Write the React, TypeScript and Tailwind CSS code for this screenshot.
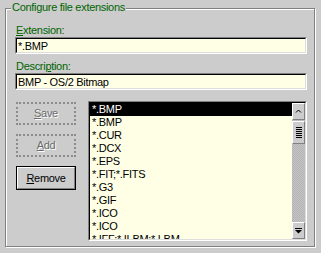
import React from "react";

const items = [
  "*.BMP",
  "*.BMP",
  "*.CUR",
  "*.DCX",
  "*.EPS",
  "*.FIT;*.FITS",
  "*.G3",
  "*.GIF",
  "*.ICO",
  "*.ICO",
  "*.IFF;*.ILBM;*.LBM",
];

function Sunken({ className = "", children }: { className?: string; children: React.ReactNode }) {
  return (
    <div className={`border border-t-[#808080] border-l-[#808080] border-b-white border-r-white ${className}`}>
      <div className="h-full border border-t-black border-l-black border-b-[#dedede] border-r-[#dedede] bg-[#ffffe6] overflow-hidden">
        {children}
      </div>
    </div>
  );
}

function Field({ label, u, rest, value }: { label: string; u: string; rest: string; value: string }) {
  return (
    <>
      <div className="h-[13px] leading-[13px] pl-[1px] text-[#006400]">
        {label}
        <span className="underline">{u}</span>
        {rest}
      </div>
      <Sunken className="w-[292px] h-[17px]">
        <div className="leading-[13px] pt-[1px] pl-[1px] whitespace-nowrap text-black">{value}</div>
      </Sunken>
    </>
  );
}

function DisabledButton({ first, rest }: { first: string; rest: string }) {
  return (
    <div className="w-[60px] h-[23px] border-2 border-dotted border-[#8c8c8c] flex items-center justify-center text-[#6c6c6c] [text-shadow:1px_1px_0_#fff]">
      <span>
        <span className="underline">{first}</span>
        {rest}
      </span>
    </div>
  );
}

function RaisedBox({ className = "", children }: { className?: string; children?: React.ReactNode }) {
  return (
    <div className={`border border-t-white border-l-white border-b-[#808080] border-r-[#808080] bg-[#cccccc] ${className}`}>
      {children}
    </div>
  );
}

export default function App() {
  return (
    <div
      className="w-[321px] h-[253px] bg-[#cccccc] pt-[8px] pl-[5px] text-[11px] tracking-[-0.3px] text-black overflow-hidden"
      style={{ fontFamily: '"Liberation Sans", Arial, sans-serif' }}
    >
      <div className="relative w-[310px] h-[239px] border border-[#808080] shadow-[inset_1px_1px_0_#fff,1px_1px_0_#fff]">
        <span className="absolute left-[5px] top-[-8px] px-[1px] bg-[#cccccc] leading-[13px] text-[#006400]">
          Configure file extensions
        </span>
        <div className="pl-[9px] pt-[15px] flex flex-col">
          <Field label="" u="E" rest="xtension:" value="*.BMP" />
          <div className="h-[6px]" />
          <Field label="Descri" u="p" rest="tion:" value="BMP - OS/2 Bitmap" />
          <div className="flex mt-[11px]">
            <div className="w-[73px] pl-[1px] pt-[1px] flex flex-col gap-[9px]">
              <DisabledButton first="S" rest="ave" />
              <DisabledButton first="A" rest="dd" />
              <div className="w-[60px] h-[24px] border border-black">
                <RaisedBox className="h-full flex items-center justify-center">
                  <span>
                    <span className="underline">R</span>emove
                  </span>
                </RaisedBox>
              </div>
            </div>
            <Sunken className="w-[219px] h-[140px]">
              <div className="flex h-full">
                <div className="flex-1 flex flex-col">
                  {items.map((t, i) => (
                    <div
                      key={i}
                      className={`h-[13px] shrink-0 leading-[13px] pl-[2px] whitespace-nowrap ${
                        i === 0 ? "bg-black text-white" : "text-black"
                      }`}
                    >
                      {t}
                    </div>
                  ))}
                </div>
                <div className="w-[13px] flex flex-col bg-[repeating-conic-gradient(#b4b4b4_0_25%,#c4c4c4_0_50%)] bg-[length:2px_2px]">
                  <RaisedBox className="h-[17px] flex items-center justify-center">
                    <svg width="7" height="5" viewBox="0 0 7 5">
                      <path d="M1 3.5 L3.5 1 L6 3.5" fill="none" stroke="#000" strokeWidth="1" />
                    </svg>
                  </RaisedBox>
                  <RaisedBox className="h-[23px] mt-[1px] flex items-center justify-center">
                    <svg width="6" height="13" viewBox="0 0 6 13">
                      {[1, 3, 5, 7, 9, 11].map((y) => (
                        <rect key={y} x="0" y={y} width="6" height="1" fill="#000" />
                      ))}
                    </svg>
                  </RaisedBox>
                  <div className="flex-1" />
                  <RaisedBox className="h-[17px] flex items-center justify-center">
                    <svg width="7" height="6" viewBox="0 0 7 6">
                      <rect x="0" y="0" width="7" height="1" fill="#000" />
                      <path d="M0 2 L7 2 L3.5 5.5 Z" fill="#000" />
                    </svg>
                  </RaisedBox>
                </div>
              </div>
            </Sunken>
          </div>
        </div>
      </div>
    </div>
  );
}
